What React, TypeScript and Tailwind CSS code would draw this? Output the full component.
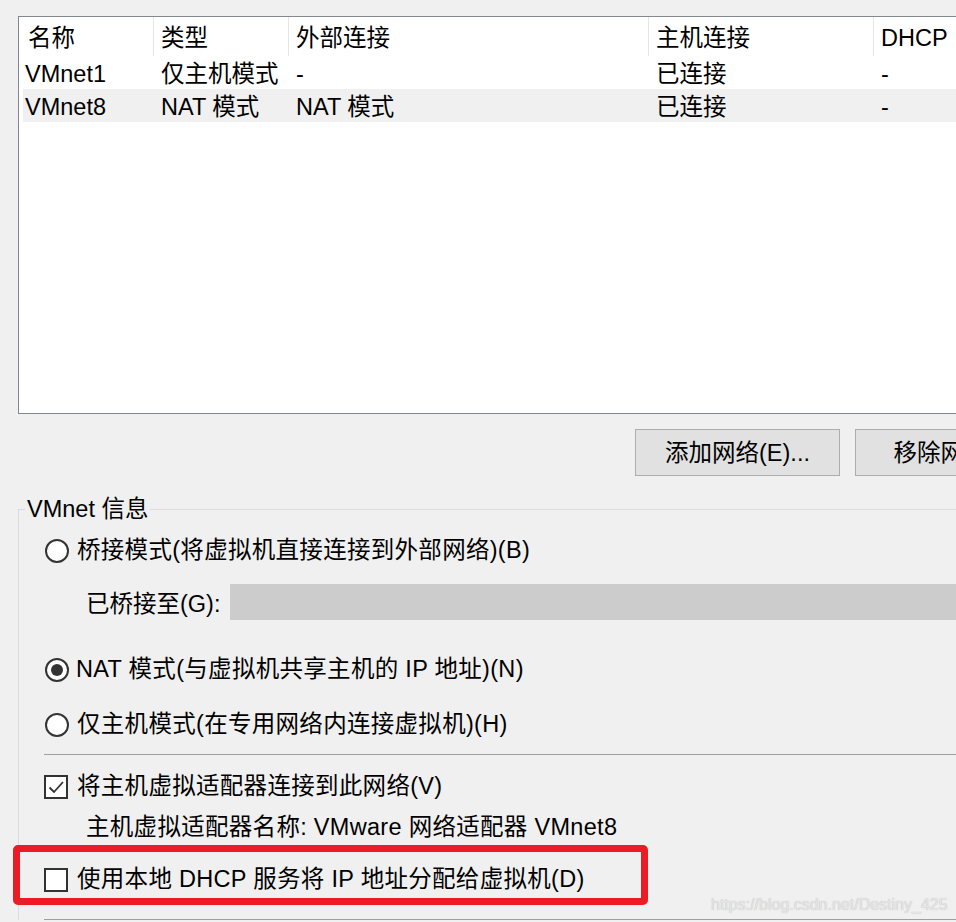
import React from "react";

const columns = [
  { key: "name", title: "名称", w: "w-[135px]" },
  { key: "type", title: "类型", w: "w-[135px]" },
  { key: "ext", title: "外部连接", w: "w-[360px]" },
  { key: "host", title: "主机连接", w: "w-[225px]" },
  { key: "dhcp", title: "DHCP", w: "w-[120px]" },
];

const rows = [
  { name: "VMnet1", type: "仅主机模式", ext: "-", host: "已连接", dhcp: "-", selected: false },
  { name: "VMnet8", type: "NAT 模式", ext: "NAT 模式", host: "已连接", dhcp: "-", selected: true },
];

const Radio = ({ checked }: { checked?: boolean }) => (
  <span className="w-[24px] h-[24px] shrink-0 rounded-full border-[2px] border-[#333] bg-white flex items-center justify-center">
    {checked && <span className="w-[12px] h-[12px] rounded-full bg-[#333]" />}
  </span>
);

const Checkbox = ({ checked }: { checked?: boolean }) => (
  <span className="w-[24px] h-[24px] shrink-0 border-[2px] border-[#333] bg-white flex items-center justify-center">
    {checked && (
      <svg width="18" height="18" viewBox="0 0 18 18">
        <path d="M2.5 9.5 L7 14 L16 4" fill="none" stroke="#333" strokeWidth="1.8" />
      </svg>
    )}
  </span>
);

export default function App() {
  return (
    <div className="w-[956px] h-[922px] bg-[#f0f0f0] overflow-hidden relative text-[23.5px] text-black font-['Liberation_Sans','Noto_Sans_CJK_SC',sans-serif]">
      {/* network list */}
      <div className="ml-[18px] mt-[16px] w-[960px] h-[398px] border border-r-0 border-[#828790] bg-white">
        <div className="flex h-[39px]">
          {columns.map((c, i) => (
            <div
              key={c.key}
              className={`${c.w} shrink-0 flex items-center pt-[4px] ${i < columns.length - 1 ? "border-r border-[#e5e5e5]" : ""} ${i === 0 ? "pl-[9px]" : "pl-[7px]"}`}
            >
              {c.title}
            </div>
          ))}
        </div>
        {rows.map((r) => (
          <div key={r.name} className={`flex h-[33px] ml-[4px] items-center pt-[4px] ${r.selected ? "bg-[#f0f0f0]" : ""}`}>
            <div className="w-[131px] shrink-0 pl-[2px]">{r.name}</div>
            <div className="w-[135px] shrink-0 pl-[7px]">{r.type}</div>
            <div className="w-[360px] shrink-0 pl-[7px]">{r.ext}</div>
            <div className="w-[225px] shrink-0 pl-[7px]">{r.host}</div>
            <div className="w-[120px] shrink-0 pl-[7px]">{r.dhcp}</div>
          </div>
        ))}
      </div>

      {/* buttons */}
      <div className="flex gap-[15px] ml-[635px] mt-[15px] w-[500px]">
        <button className="w-[205px] h-[47px] shrink-0 bg-[#e1e1e1] border border-[#adadad] flex items-center justify-center pt-[3px]">
          添加网络(E)...
        </button>
        <button className="w-[205px] h-[47px] shrink-0 bg-[#e1e1e1] border border-[#adadad] flex items-center justify-center pt-[3px]">
          移除网络(O)
        </button>
      </div>

      {/* VMnet info group */}
      <fieldset className="ml-[18px] mt-[18px] w-[960px] border border-r-0 border-b-0 border-[#dcdcdc] pl-[6px]">
        <legend className="px-[2px] leading-[30px]">VMnet 信息</legend>

        <div className="pl-[20px]">
          <div className="mt-[9px] h-[36px] flex items-center gap-[8px]">
            <Radio />
            <span className="tracking-[0.3px]">桥接模式(将虚拟机直接连接到外部网络)(B)</span>
          </div>

          <div className="mt-[15px] h-[36px] flex items-center pl-[41px]">
            <span className="w-[144px] shrink-0 pt-[5px]">已桥接至(G):</span>
            <div className="h-[36px] flex-1 bg-[#cccccc]" />
          </div>

          <div className="mt-[32px] h-[36px] flex items-center gap-[7px]">
            <Radio checked />
            <span className="tracking-[0.3px]">NAT 模式(与虚拟机共享主机的 IP 地址)(N)</span>
          </div>

          <div className="mt-[19px] h-[36px] flex items-center gap-[8px]">
            <Radio />
            <span className="tracking-[0.3px]">仅主机模式(在专用网络内连接虚拟机)(H)</span>
          </div>

          <div className="mt-[11px] h-px bg-[#a0a0a0] -ml-[1px]" />

          <div className="mt-[14px] h-[36px] flex items-center gap-[9px] -ml-[1px]">
            <Checkbox checked />
            <span className="tracking-[0.3px]">将主机虚拟适配器连接到此网络(V)</span>
          </div>

          <div className="mt-[5px] h-[36px] flex items-center pl-[41px] tracking-[0.3px]">
            主机虚拟适配器名称: VMware 网络适配器 VMnet8
          </div>

          <div className="mt-[16px] h-[36px] flex items-center gap-[9px] -ml-[1px]">
            <Checkbox />
            <span className="tracking-[0.3px]">使用本地 DHCP 服务将 IP 地址分配给虚拟机(D)</span>
          </div>

          <div className="mt-[21px] h-px bg-[#a0a0a0] -ml-[1px]" />
        </div>
      </fieldset>

      {/* annotation overlay */}
      <div className="absolute left-[13px] top-[845px] w-[635px] h-[60px] border-[7px] border-[#ec1c24] rounded-[5px] pointer-events-none" />
      <div className="absolute left-[711px] top-[893px] text-[16px] text-[#e6e6e6] font-['Liberation_Sans',sans-serif] [text-shadow:0_0_1px_#b0b0b0]">
        https://blog.csdn.net/Destiny_425
      </div>
    </div>
  );
}
